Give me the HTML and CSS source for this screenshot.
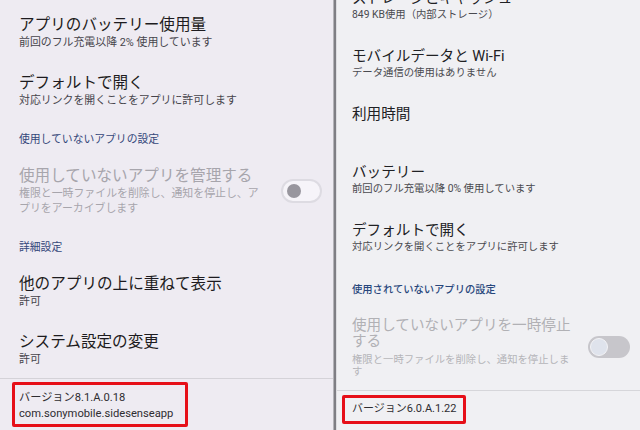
FILE: index.html
```html
<!DOCTYPE html>
<html lang="ja">
<head>
  <meta charset="UTF-8">
  <title>アプリ情報</title>
  <link rel="stylesheet" href="styles.css">
</head>
<body>
  <div class="screen">
    <section class="panel panel-left">
      <div class="pref">
        <div class="pref-title">アプリのバッテリー使用量</div>
        <div class="pref-sub">前回のフル充電以降 2% 使用しています</div>
      </div>
      <div class="pref">
        <div class="pref-title">デフォルトで開く</div>
        <div class="pref-sub">対応リンクを開くことをアプリに許可します</div>
      </div>
      <div class="cat">使用していないアプリの設定</div>
      <div class="pref switch-row disabled">
        <div class="pref-text">
          <div class="pref-title">使用していないアプリを管理する</div>
          <div class="pref-sub">権限と一時ファイルを削除し、通知を停止し、ア<br>プリをアーカイブします</div>
        </div>
        <div class="toggle"><span class="thumb"></span></div>
      </div>
      <div class="cat">詳細設定</div>
      <div class="pref">
        <div class="pref-title">他のアプリの上に重ねて表示</div>
        <div class="pref-sub">許可</div>
      </div>
      <div class="pref">
        <div class="pref-title">システム設定の変更</div>
        <div class="pref-sub">許可</div>
      </div>
      <div class="divider"></div>
      <div class="version">
        <div>バージョン8.1.A.0.18</div>
        <div>com.sonymobile.sidesenseapp</div>
      </div>
    </section>

    <div class="split"></div>

    <section class="panel panel-right">
      <div class="pref">
        <div class="pref-title">ストレージとキャッシュ</div>
        <div class="pref-sub">849 KB使用（内部ストレージ）</div>
      </div>
      <div class="pref">
        <div class="pref-title">モバイルデータと Wi-Fi</div>
        <div class="pref-sub">データ通信の使用はありません</div>
      </div>
      <div class="pref single">
        <div class="pref-title">利用時間</div>
      </div>
      <div class="pref">
        <div class="pref-title">バッテリー</div>
        <div class="pref-sub">前回のフル充電以降 0% 使用しています</div>
      </div>
      <div class="pref">
        <div class="pref-title">デフォルトで開く</div>
        <div class="pref-sub">対応リンクを開くことをアプリに許可します</div>
      </div>
      <div class="cat">使用されていないアプリの設定</div>
      <div class="pref switch-row disabled">
        <div class="pref-text">
          <div class="pref-title">使用していないアプリを一時停止<br>する</div>
          <div class="pref-sub">権限と一時ファイルを削除し、通知を停止しま<br>す</div>
        </div>
        <div class="toggle"><span class="thumb"></span></div>
      </div>
      <div class="divider"></div>
      <div class="version">
        <div>バージョン6.0.A.1.22</div>
      </div>
    </section>
  </div>
</body>
</html>
```

FILE: styles.css
```css
body {
  margin: 0;
  font-family: Roboto, "Noto Sans CJK JP", sans-serif;
  background: #fff;
}

.screen {
  display: flex;
  width: 640px;
  height: 430px;
  overflow: hidden;
}

.panel {
  height: 430px;
  overflow: hidden;
}

.split {
  width: 4px;
  background: linear-gradient(to right, #b4b3b8 0, #b4b3b8 1px, #7f7e84 1px, #7f7e84 3px, #dcdce0 3px);
}

/* left screenshot */
.panel-left {
  width: 333px;
  background: #eeebf2;
  padding: 14.5px 11px 0 19px;
  box-sizing: border-box;
}

.panel-left .pref {
  margin-top: 23px;
}

.panel-left .pref:first-child {
  margin-top: 0;
}

.panel-left .pref-title {
  font-size: 15.6px;
  line-height: 20px;
  color: #1d1b20;
}

.panel-left .pref-sub {
  font-size: 10.9px;
  line-height: 15px;
  color: #46444b;
}

.panel-left .cat {
  margin-top: 24.5px;
  font-size: 10.8px;
  line-height: 15px;
  color: #34477a;
}

.panel-left .cat + .pref {
  margin-top: 19px;
}

.panel-left .cat + .switch-row {
  margin-top: 18.5px;
}

.panel-left .disabled .pref-title,
.panel-left .disabled .pref-sub {
  color: #a7a5ac;
}

.panel-left .toggle {
  width: 41px;
  height: 24px;
  border: 2px solid #dddbe2;
  background: #f6f4f9;
  border-radius: 14px;
  padding-left: 4px;
}

.panel-left .thumb {
  width: 14px;
  height: 14px;
  background: #98969e;
}

.panel-left .divider {
  margin: 10.5px -11px 0 -19px;
  height: 1px;
  background: #d4d2d8;
}

.panel-left .version {
  margin: 3px 0 0 -7px;
  width: 176px;
  height: 45px;
  padding: 5px 4px 0;
  font-size: 11.2px;
  line-height: 16px;
}

/* right screenshot */
.panel-right {
  flex: 1;
  background: #f0f0f3;
  padding: 0 10px 0 15px;
  box-sizing: border-box;
}

.panel-right .pref {
  margin-top: 24px;
}

.panel-right .pref:first-child {
  margin-top: -12px;
}

.panel-right .pref.single {
  padding-bottom: 14px;
}

.panel-right .pref-title {
  font-size: 14.6px;
  line-height: 20px;
  color: #202124;
}

.panel-right .pref-sub {
  font-size: 10.35px;
  line-height: 14px;
  color: #4a4a4f;
}

.panel-right .cat {
  margin-top: 29px;
  font-size: 10.3px;
  line-height: 14px;
  font-weight: 500;
  color: #28477c;
}

.panel-right .cat + .switch-row {
  margin-top: 19.75px;
}

.panel-right .disabled .pref-title {
  line-height: 16.5px;
  color: #b1b1b5;
}

.panel-right .disabled .pref-sub {
  margin-top: 4px;
  line-height: 12px;
  color: #b5b5b9;
}

.panel-right .toggle {
  width: 42px;
  height: 22px;
  background: #c7c6cb;
  border-radius: 11px;
  padding-left: 2px;
}

.panel-right .thumb {
  width: 18px;
  height: 18px;
  background: #dfe3ec;
  border: 1.5px solid #f3f3f6;
}

.panel-right .divider {
  margin: 12px -10px 0 -15px;
  height: 1px;
  background: #d6d6da;
}

.panel-right .version {
  margin: 4px 0 0 -10px;
  width: max-content;
  height: 29px;
  padding: 3px 7px 0;
  font-size: 11px;
  line-height: 16px;
  white-space: nowrap;
}

/* shared parts */
.switch-row {
  display: flex;
  align-items: center;
  justify-content: space-between;
}

.toggle {
  display: flex;
  align-items: center;
  box-sizing: border-box;
  flex-shrink: 0;
}

.thumb {
  display: block;
  border-radius: 50%;
  box-sizing: border-box;
}

.version {
  box-sizing: border-box;
  border: 3px solid #e60f18;
  border-radius: 2px;
  color: #2e2d31;
}
```
